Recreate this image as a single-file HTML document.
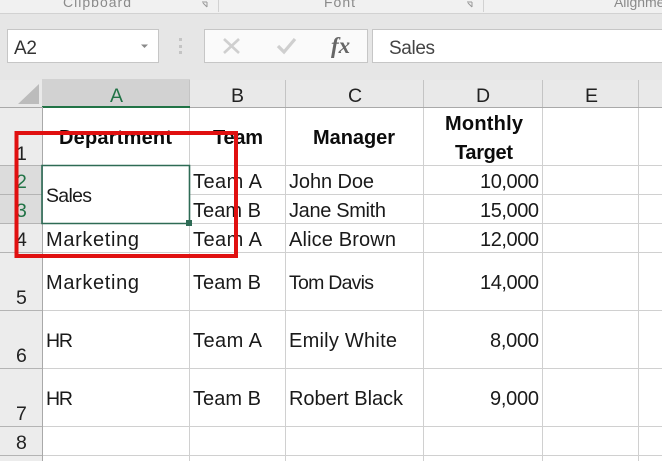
<!DOCTYPE html>
<html><head><meta charset="utf-8"><style>
html,body{margin:0;padding:0;background:#fff}
svg{display:block}
text{font-family:"Liberation Sans",sans-serif;font-size:20px;fill:#1a1a1a}
.s{font-size:19.5px}
.n{font-size:19.5px}
.b{font-weight:bold;fill:#0c0c0c}
.h{fill:#222}
.r{fill:#8a8a8a;font-size:14px}
</style></head><body>
<svg width="662" height="461" viewBox="0 0 662 461" xmlns="http://www.w3.org/2000/svg">
<rect width="662" height="461" fill="#fff"/>
<rect width="662" height="14" fill="#f1f1f1"/>
<rect y="13" width="662" height="1" fill="#d2d2d2"/>
<rect y="14" width="662" height="66" fill="#e6e6e6"/>
<rect y="80" width="662" height="28" fill="#e9e9e9"/>
<rect x="0" y="108" width="42" height="353" fill="#ececec"/>
<rect x="218" y="0" width="1" height="12" fill="#d2d2d2"/><rect x="483" y="0" width="1" height="12" fill="#d2d2d2"/>
<text class="r" x="63" y="7" textLength="68">Clipboard</text>
<text class="r" x="324" y="7" textLength="31">Font</text>
<text class="r" x="614" y="7" textLength="62">Alignment</text>
<path d="M202 2h5M207 2v5M203 3l4 4" stroke="#999" fill="none"/><path d="M467 2h5M472 2v5M468 3l4 4" stroke="#999" fill="none"/>
<rect x="7.5" y="29.5" width="151" height="33" fill="#fff" stroke="#c6c6c6"/>
<text x="14" y="54" textLength="23" style="font-size:19px;fill:#333">A2</text>
<path d="M141 44.5h7l-3.5 3.5z" fill="#8a8a8a"/>
<rect x="179" y="38" width="3" height="3" fill="#c4c4c4"/><rect x="179" y="45" width="3" height="3" fill="#c4c4c4"/><rect x="179" y="51" width="3" height="3" fill="#c4c4c4"/>
<rect x="204.5" y="29.5" width="163" height="33" fill="#fafafa" stroke="#c6c6c6"/>
<path d="M224 39L239 53M239 39L224 53" stroke="#cfcfcf" stroke-width="2.6" fill="none"/>
<path d="M278 46L284 52L295 39" stroke="#cfcfcf" stroke-width="3.2" fill="none"/>
<text x="331" y="53" style="font-family:'Liberation Serif',serif;font-style:italic;font-weight:bold;font-size:23px;fill:#666">fx</text>
<rect x="372.5" y="29.5" width="295" height="33" fill="#fff" stroke="#c6c6c6"/>
<text x="389" y="54" textLength="46" style="font-size:19px;fill:#444">Sales</text>

<rect x="42" y="79" width="148" height="28" fill="#d2d2d2"/>
<rect x="0" y="165" width="42" height="58" fill="#dcdcdc"/>
<path d="M18 104L39 84V104Z" fill="#bcbcbc"/>
<g fill="#c4c4c4">
<rect x="189" y="80" width="1" height="27"/><rect x="285" y="80" width="1" height="27"/><rect x="423" y="80" width="1" height="27"/><rect x="542" y="80" width="1" height="27"/><rect x="638" y="80" width="1" height="27"/>
</g>
<rect x="0" y="107" width="662" height="1" fill="#a9a9a9"/>
<rect x="42" y="106" width="148" height="2" fill="#217346"/>
<rect x="42" y="107" width="1" height="354" fill="#a9a9a9"/>
<g fill="#d0d0d0">
<rect x="189" y="108" width="1" height="353"/><rect x="285" y="108" width="1" height="353"/><rect x="423" y="108" width="1" height="353"/><rect x="542" y="108" width="1" height="353"/><rect x="638" y="108" width="1" height="353"/>
<rect x="43" y="165" width="619" height="1"/><rect x="190" y="194" width="472" height="1"/><rect x="43" y="223" width="619" height="1"/><rect x="43" y="252" width="619" height="1"/><rect x="43" y="310" width="619" height="1"/><rect x="43" y="368" width="619" height="1"/><rect x="43" y="426" width="619" height="1"/><rect x="43" y="455" width="619" height="1"/>
</g>
<g fill="#b4b4b4">
<rect x="0" y="165" width="42" height="1"/><rect x="0" y="194" width="42" height="1"/><rect x="0" y="223" width="42" height="1"/><rect x="0" y="252" width="42" height="1"/><rect x="0" y="310" width="42" height="1"/><rect x="0" y="368" width="42" height="1"/><rect x="0" y="426" width="42" height="1"/><rect x="0" y="455" width="42" height="1"/>
</g>

<text class="n" x="110" y="102" style="fill:#217346">A</text>
<text class="h n" x="231" y="102">B</text>
<text class="h n" x="348" y="102">C</text>
<text class="h n" x="476" y="102">D</text>
<text class="h n" x="585" y="102">E</text>

<text class="h n" x="16" y="160">1</text>
<text class="n" x="16" y="188" style="fill:#217346">2</text>
<text class="n" x="16" y="217" style="fill:#217346">3</text>
<text class="h n" x="16" y="246">4</text>
<text class="h n" x="16" y="304">5</text>
<text class="h n" x="16" y="362">6</text>
<text class="h n" x="16" y="420">7</text>
<text class="h n" x="16" y="449">8</text>

<text class="b" x="59" y="144" textLength="113">Department</text>
<text class="b" x="213" y="144" textLength="50">Team</text>
<text class="b" x="313" y="144" textLength="82">Manager</text>
<text class="b" x="445" y="130" textLength="78">Monthly</text>
<text class="b" x="455" y="159" textLength="58">Target</text>

<text class="s" x="46" y="202" textLength="46">Sales</text>
<text x="46" y="246" textLength="93">Marketing</text>
<text x="46" y="289" textLength="93">Marketing</text>
<text class="s" x="46" y="347" textLength="27">HR</text>
<text class="s" x="46" y="405" textLength="27">HR</text>

<text x="193" y="188" textLength="69">Team A</text>
<text x="193" y="217" textLength="68">Team B</text>
<text x="193" y="246" textLength="69">Team A</text>
<text x="193" y="289" textLength="68">Team B</text>
<text x="193" y="347" textLength="69">Team A</text>
<text x="193" y="405" textLength="68">Team B</text>

<text x="289" y="188" textLength="85">John Doe</text>
<text x="289" y="217" textLength="97">Jane Smith</text>
<text x="289" y="246" textLength="107">Alice Brown</text>
<text class="s" x="289" y="289" textLength="85">Tom Davis</text>
<text x="289" y="347" textLength="108">Emily White</text>
<text x="289" y="405" textLength="114">Robert Black</text>

<text x="480" y="188" textLength="59">10,000</text>
<text x="480" y="217" textLength="59">15,000</text>
<text x="480" y="246" textLength="59">12,000</text>
<text x="480" y="289" textLength="59">14,000</text>
<text x="490" y="347" textLength="49">8,000</text>
<text x="490" y="405" textLength="49">9,000</text>

<path d="M42 165.5H189.5V223.5H42Z" fill="none" stroke="#2e6b55" stroke-width="1.6"/>
<rect x="186" y="220" width="6" height="6" fill="#2e6b55"/>
<rect x="16.5" y="133" width="219.5" height="123" fill="none" stroke="#e01010" stroke-width="4"/>
</svg>
</body></html>
